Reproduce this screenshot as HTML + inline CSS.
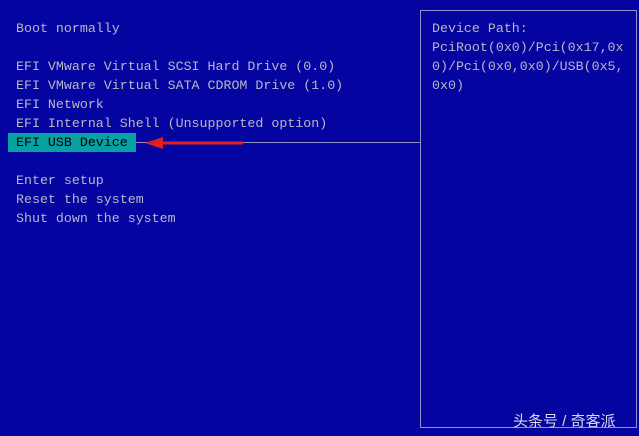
<!DOCTYPE html>
<html><head><style>
body{margin:0;width:639px;height:436px;background:#0404a0;overflow:hidden;position:relative;font-family:"Liberation Mono",monospace;font-size:13.3px;color:#b8b8c8}
.t{position:absolute;white-space:pre;line-height:19px}
</style></head><body>
<div class="t" style="left:16px;top:19px">Boot normally</div>
<div class="t" style="left:16px;top:57px">EFI VMware Virtual SCSI Hard Drive (0.0)
EFI VMware Virtual SATA CDROM Drive (1.0)
EFI Network
EFI Internal Shell (Unsupported option)</div>
<div style="position:absolute;left:8px;top:133px;width:128px;height:19px;background:#08a0a0"></div>
<div class="t" style="left:16px;top:133px;color:#000">EFI USB Device</div>
<div style="position:absolute;left:136px;top:142px;width:284px;height:1px;background:#9090c8"></div>
<svg style="position:absolute;left:145px;top:136px" width="100" height="14"><path d="M0 7 L18 1 L18 13 Z" fill="#e02020"/><rect x="16" y="5.5" width="82" height="3" fill="#e02020"/></svg>
<div class="t" style="left:16px;top:171px">Enter setup
Reset the system
Shut down the system</div>
<div style="position:absolute;left:420px;top:10px;width:215px;height:416px;border:1px solid #9090c8"></div>
<div class="t" style="left:432px;top:19px">Device Path:
PciRoot(0x0)/Pci(0x17,0x
0)/Pci(0x0,0x0)/USB(0x5,
0x0)</div>
<div style="position:absolute;left:513px;top:410px;font-family:'Liberation Sans','Noto Sans CJK SC',sans-serif;font-size:15px;color:#d8d8e8">头条号 / 奇客派</div>
</body></html>
